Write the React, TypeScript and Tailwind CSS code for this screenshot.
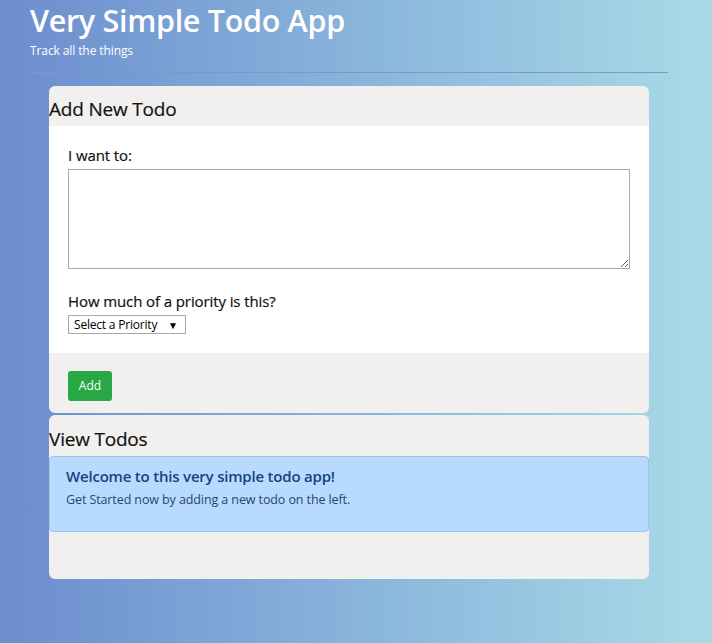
import React from "react";

export default function App() {
  return (
    <div
      className="min-h-[643px] w-full bg-gradient-to-r from-[#6c8dce] to-[#a9dbe7] text-[#212529]"
      style={{ fontFamily: '"Open Sans", "Noto Sans", sans-serif' }}
    >
      <div className="px-[30px] pt-[1px] pb-[13px]">
        <h1 className="text-[30.5px] leading-[38px] font-semibold text-white tracking-[-0.3px]">
          Very Simple Todo App
        </h1>
        <p className="mt-[3px] text-[12px] leading-[18px] text-white tracking-[-0.1px]">Track all the things</p>
        <div className="mt-[12px] w-[638px] h-px bg-[#7a98c8]" />
      </div>
      <div className="ml-[49px] w-[600px] flex flex-col gap-[2px]">
        <div className="rounded-[6px] bg-[#f1f0ef] overflow-hidden">
          <div className="h-[40px] flex items-end pb-[5px]">
            <h2 className="text-[19px] leading-[24px] tracking-[-0.2px] text-[#111]" style={{ WebkitTextStroke: "0.2px #111" }}>Add New Todo</h2>
          </div>
          <div className="bg-white px-[19px] pt-[18px] pb-[19px]">
            <label className="block text-[15px] leading-[22px] tracking-[-0.1px] text-[#111]" style={{ WebkitTextStroke: "0.2px #111" }}>I want to:</label>
            <textarea className="mt-[3px] block w-[562px] h-[100px] border border-[#a9a9a9] resize-y bg-white" />
            <label className="block mt-[21px] text-[15px] leading-[22px] tracking-[-0.1px] text-[#111]" style={{ WebkitTextStroke: "0.2px #111" }}>
              How much of a priority is this?
            </label>
            <div className="mt-[3px] w-[118px] h-[19px] border border-[#a9a9a9] flex items-center justify-between pl-[5px] pr-[7px] text-[12px] leading-none bg-white text-black">
              <span className="tracking-[-0.2px]">Select a Priority</span>
              <span className="text-[10px]">▼</span>
            </div>
          </div>
          <div className="h-[60px] px-[19px] pt-[18px]">
            <button className="h-[30px] w-[44px] rounded-[3px] bg-[#28a745] text-white text-[12px]">Add</button>
          </div>
        </div>
        <div className="rounded-[6px] bg-[#f1f0ef] h-[164px] overflow-hidden">
          <div className="h-[41px] flex items-end pb-[5px]">
            <h2 className="text-[19px] leading-[24px] tracking-[-0.2px] text-[#111]" style={{ WebkitTextStroke: "0.2px #111" }}>View Todos</h2>
          </div>
          <div className="h-[76px] rounded-[4px] border border-[#9fc4ec] bg-[#b8daff] px-[16px] pt-[8px]">
            <div className="text-[15px] leading-[22px] font-semibold tracking-[-0.2px] text-[#17427f]">
              Welcome to this very simple todo app!
            </div>
            <div className="mt-[4px] text-[12.5px] leading-[18px] tracking-[-0.1px] text-[#23476f]">
              Get Started now by adding a new todo on the left.
            </div>
          </div>
        </div>
      </div>
    </div>
  );
}
